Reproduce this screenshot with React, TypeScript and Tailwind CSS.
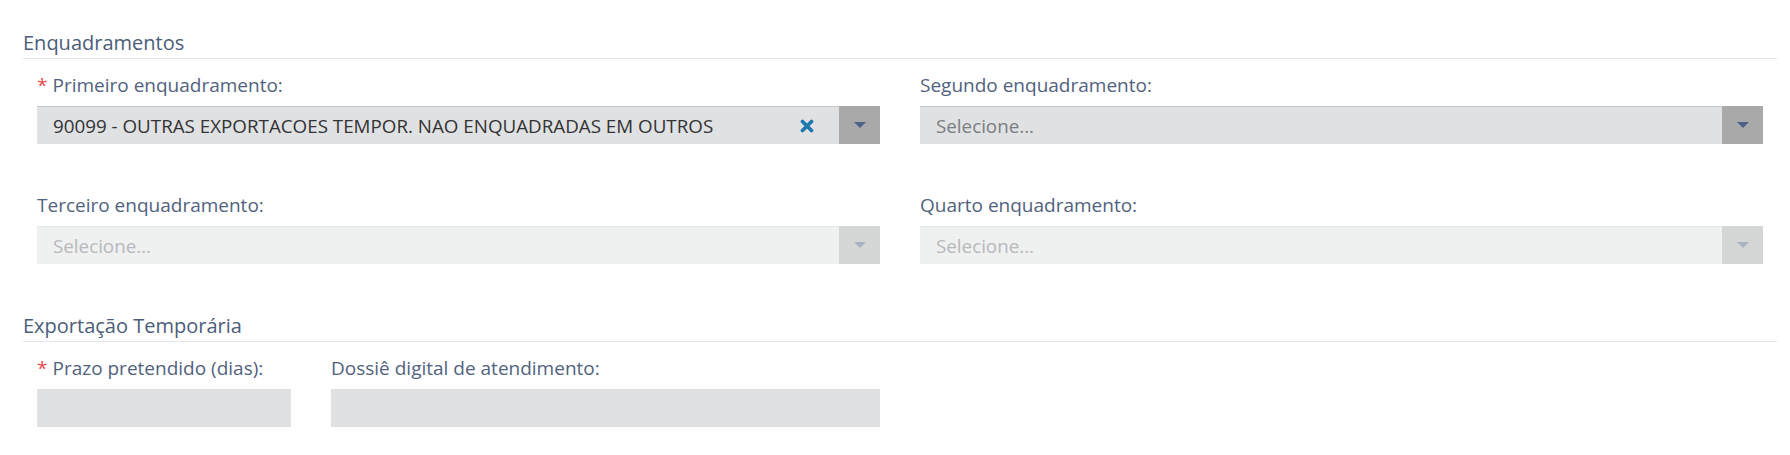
import { ReactNode } from "react";

const font = { fontFamily: '"Open Sans", "Liberation Sans", sans-serif' };

function Caret({ disabled }: { disabled?: boolean }) {
  return (
    <svg width="12" height="6" viewBox="0 0 12 6" className="block">
      <path d="M0 0 H12 L6 6 Z" fill={disabled ? "#a9b3c1" : "#4b6286"} />
    </svg>
  );
}

function ClearIcon() {
  return (
    <svg width="14" height="14" viewBox="0 0 14 14" className="block">
      <path d="M2.5 2.5 L11.5 11.5 M11.5 2.5 L2.5 11.5" stroke="#1f78b0" strokeWidth="3.8" strokeLinecap="round" />
    </svg>
  );
}

function Label({ children, required }: { children: ReactNode; required?: boolean }) {
  return (
    <div className="h-[26px] leading-[26px] text-[19px] text-[#51627e] mb-[8px] whitespace-nowrap">
      {required && <span className="text-[#e8494b] mr-[5px]">*</span>}
      {children}
    </div>
  );
}

function Select({ value, disabled }: { value?: string; disabled?: boolean }) {
  return (
    <div
      className={`flex h-[38px] border-t ${
        disabled ? "bg-[#eff0f0] border-[#e6e7e7]" : "bg-[#e0e1e3] border-[#c9cacb]"
      }`}
    >
      <div className="flex-1 flex items-center pl-[16px] pr-[25px] min-w-0">
        <span
          className={`flex-1 text-[18.8px] leading-[26px] whitespace-nowrap overflow-hidden ${
            value ? "text-[#333333]" : disabled ? "text-[#b7b9bb]" : "text-[#7b7d80]"
          }`}
        >
          {value ?? "Selecione..."}
        </span>
        {value && <ClearIcon />}
      </div>
      <div
        className={`w-[41px] -mt-px flex items-center justify-center ${
          disabled ? "bg-[#d5d6d6]" : "bg-[#a9a9a9]"
        }`}
      >
        <Caret disabled={disabled} />
      </div>
    </div>
  );
}

function Field({
  label,
  required,
  children,
}: {
  label: string;
  required?: boolean;
  children: ReactNode;
}) {
  return (
    <div>
      <Label required={required}>{label}</Label>
      {children}
    </div>
  );
}

function SectionTitle({ children }: { children: ReactNode }) {
  return (
    <div className="h-[26px] leading-[26px] text-[20px] text-[#4b5d79] box-content pb-[2px] border-b border-[#e4e5e6]">
      {children}
    </div>
  );
}

export default function App() {
  return (
    <div className="w-[1790px] h-[455px] bg-white pt-[30px] pl-[23px] pr-[13px]" style={font}>
      {/* Enquadramentos */}
      <SectionTitle>Enquadramentos</SectionTitle>
      <div className="px-[14px] pt-[13px] grid grid-cols-2 gap-x-[40px] gap-y-[48px]">
        <Field label="Primeiro enquadramento:" required>
          <Select value="90099 - OUTRAS EXPORTACOES TEMPOR. NAO ENQUADRADAS EM OUTROS" />
        </Field>
        <Field label="Segundo enquadramento:">
          <Select />
        </Field>
        <Field label="Terceiro enquadramento:">
          <Select disabled />
        </Field>
        <Field label="Quarto enquadramento:">
          <Select disabled />
        </Field>
      </div>

      {/* Exportação Temporária */}
      <div className="mt-[49px]">
        <SectionTitle>Exportação Temporária</SectionTitle>
      </div>
      <div className="px-[14px] pt-[13px] flex gap-[40px]">
        <div className="w-[254px]">
          <Label required>Prazo pretendido (dias):</Label>
          <div className="h-[38px] bg-[#e0e1e3]" />
        </div>
        <div className="w-[549px]">
          <Label>Dossiê digital de atendimento:</Label>
          <div className="h-[38px] bg-[#e0e1e3]" />
        </div>
      </div>
    </div>
  );
}
